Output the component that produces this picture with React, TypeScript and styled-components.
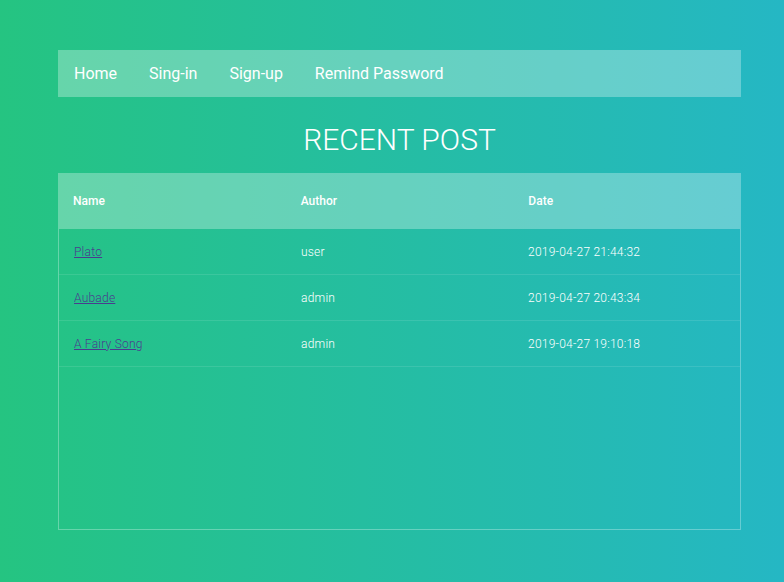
import React from "react";
import styled, { createGlobalStyle } from "styled-components";

const Global = createGlobalStyle`
  html, body { margin: 0; padding: 0; }
  body {
    background: linear-gradient(to right, #25c481, #25b7c4);
    min-height: 582px;
    font-family: Roboto, "Liberation Sans", sans-serif;
  }
`;

const Page = styled.div`
  padding: 50px 43px 0 58px;
`;

const Nav = styled.nav`
  display: flex;
  align-items: center;
  height: 47px;
  background: rgba(255, 255, 255, 0.3);
`;

const NavLink = styled.a`
  padding: 0 16px;
  color: #fff;
  font-size: 16px;
  text-decoration: none;
`;

const Title = styled.h1`
  margin: 0;
  padding: 26px 0 16px;
  text-align: center;
  font-size: 30px;
  line-height: 34px;
  font-weight: 300;
  color: #fff;
  text-transform: uppercase;
`;

const Table = styled.div`
  display: flex;
  flex-direction: column;
`;

const HeadRow = styled.div`
  display: grid;
  grid-template-columns: 1fr 1fr 1fr;
  height: 56px;
  align-items: center;
  background: rgba(255, 255, 255, 0.3);
`;

const HeadCell = styled.div`
  padding: 0 15px;
  font-size: 12px;
  font-weight: 500;
  color: #fff;
`;

const Body = styled.div`
  height: 300px;
  border: 1px solid rgba(255, 255, 255, 0.3);
  border-top: none;
`;

const Row = styled.div`
  display: grid;
  grid-template-columns: 1fr 1fr 1fr;
  height: 45px;
  align-items: center;
  border-bottom: 1px solid rgba(255, 255, 255, 0.1);
`;

const Cell = styled.div`
  padding: 0 15px;
  font-size: 12px;
  font-weight: 300;
  letter-spacing: 0.22px;
  color: #fff;
`;

const PostLink = styled.a`
  color: #4a3d8f;
  text-decoration: underline;
`;

const posts = [
  { name: "Plato", author: "user", date: "2019-04-27 21:44:32" },
  { name: "Aubade", author: "admin", date: "2019-04-27 20:43:34" },
  { name: "A Fairy Song", author: "admin", date: "2019-04-27 19:10:18" },
];

export default function App() {
  return (
    <>
      <Global />
      <Page>
        <Nav>
          <NavLink href="#">Home</NavLink>
          <NavLink href="#">Sing-in</NavLink>
          <NavLink href="#">Sign-up</NavLink>
          <NavLink href="#">Remind Password</NavLink>
        </Nav>
        <Title>Recent Post</Title>
        <Table>
          <HeadRow>
            <HeadCell>Name</HeadCell>
            <HeadCell>Author</HeadCell>
            <HeadCell>Date</HeadCell>
          </HeadRow>
          <Body>
            {posts.map((p) => (
              <Row key={p.name}>
                <Cell>
                  <PostLink href="#">{p.name}</PostLink>
                </Cell>
                <Cell>{p.author}</Cell>
                <Cell>{p.date}</Cell>
              </Row>
            ))}
          </Body>
        </Table>
      </Page>
    </>
  );
}
